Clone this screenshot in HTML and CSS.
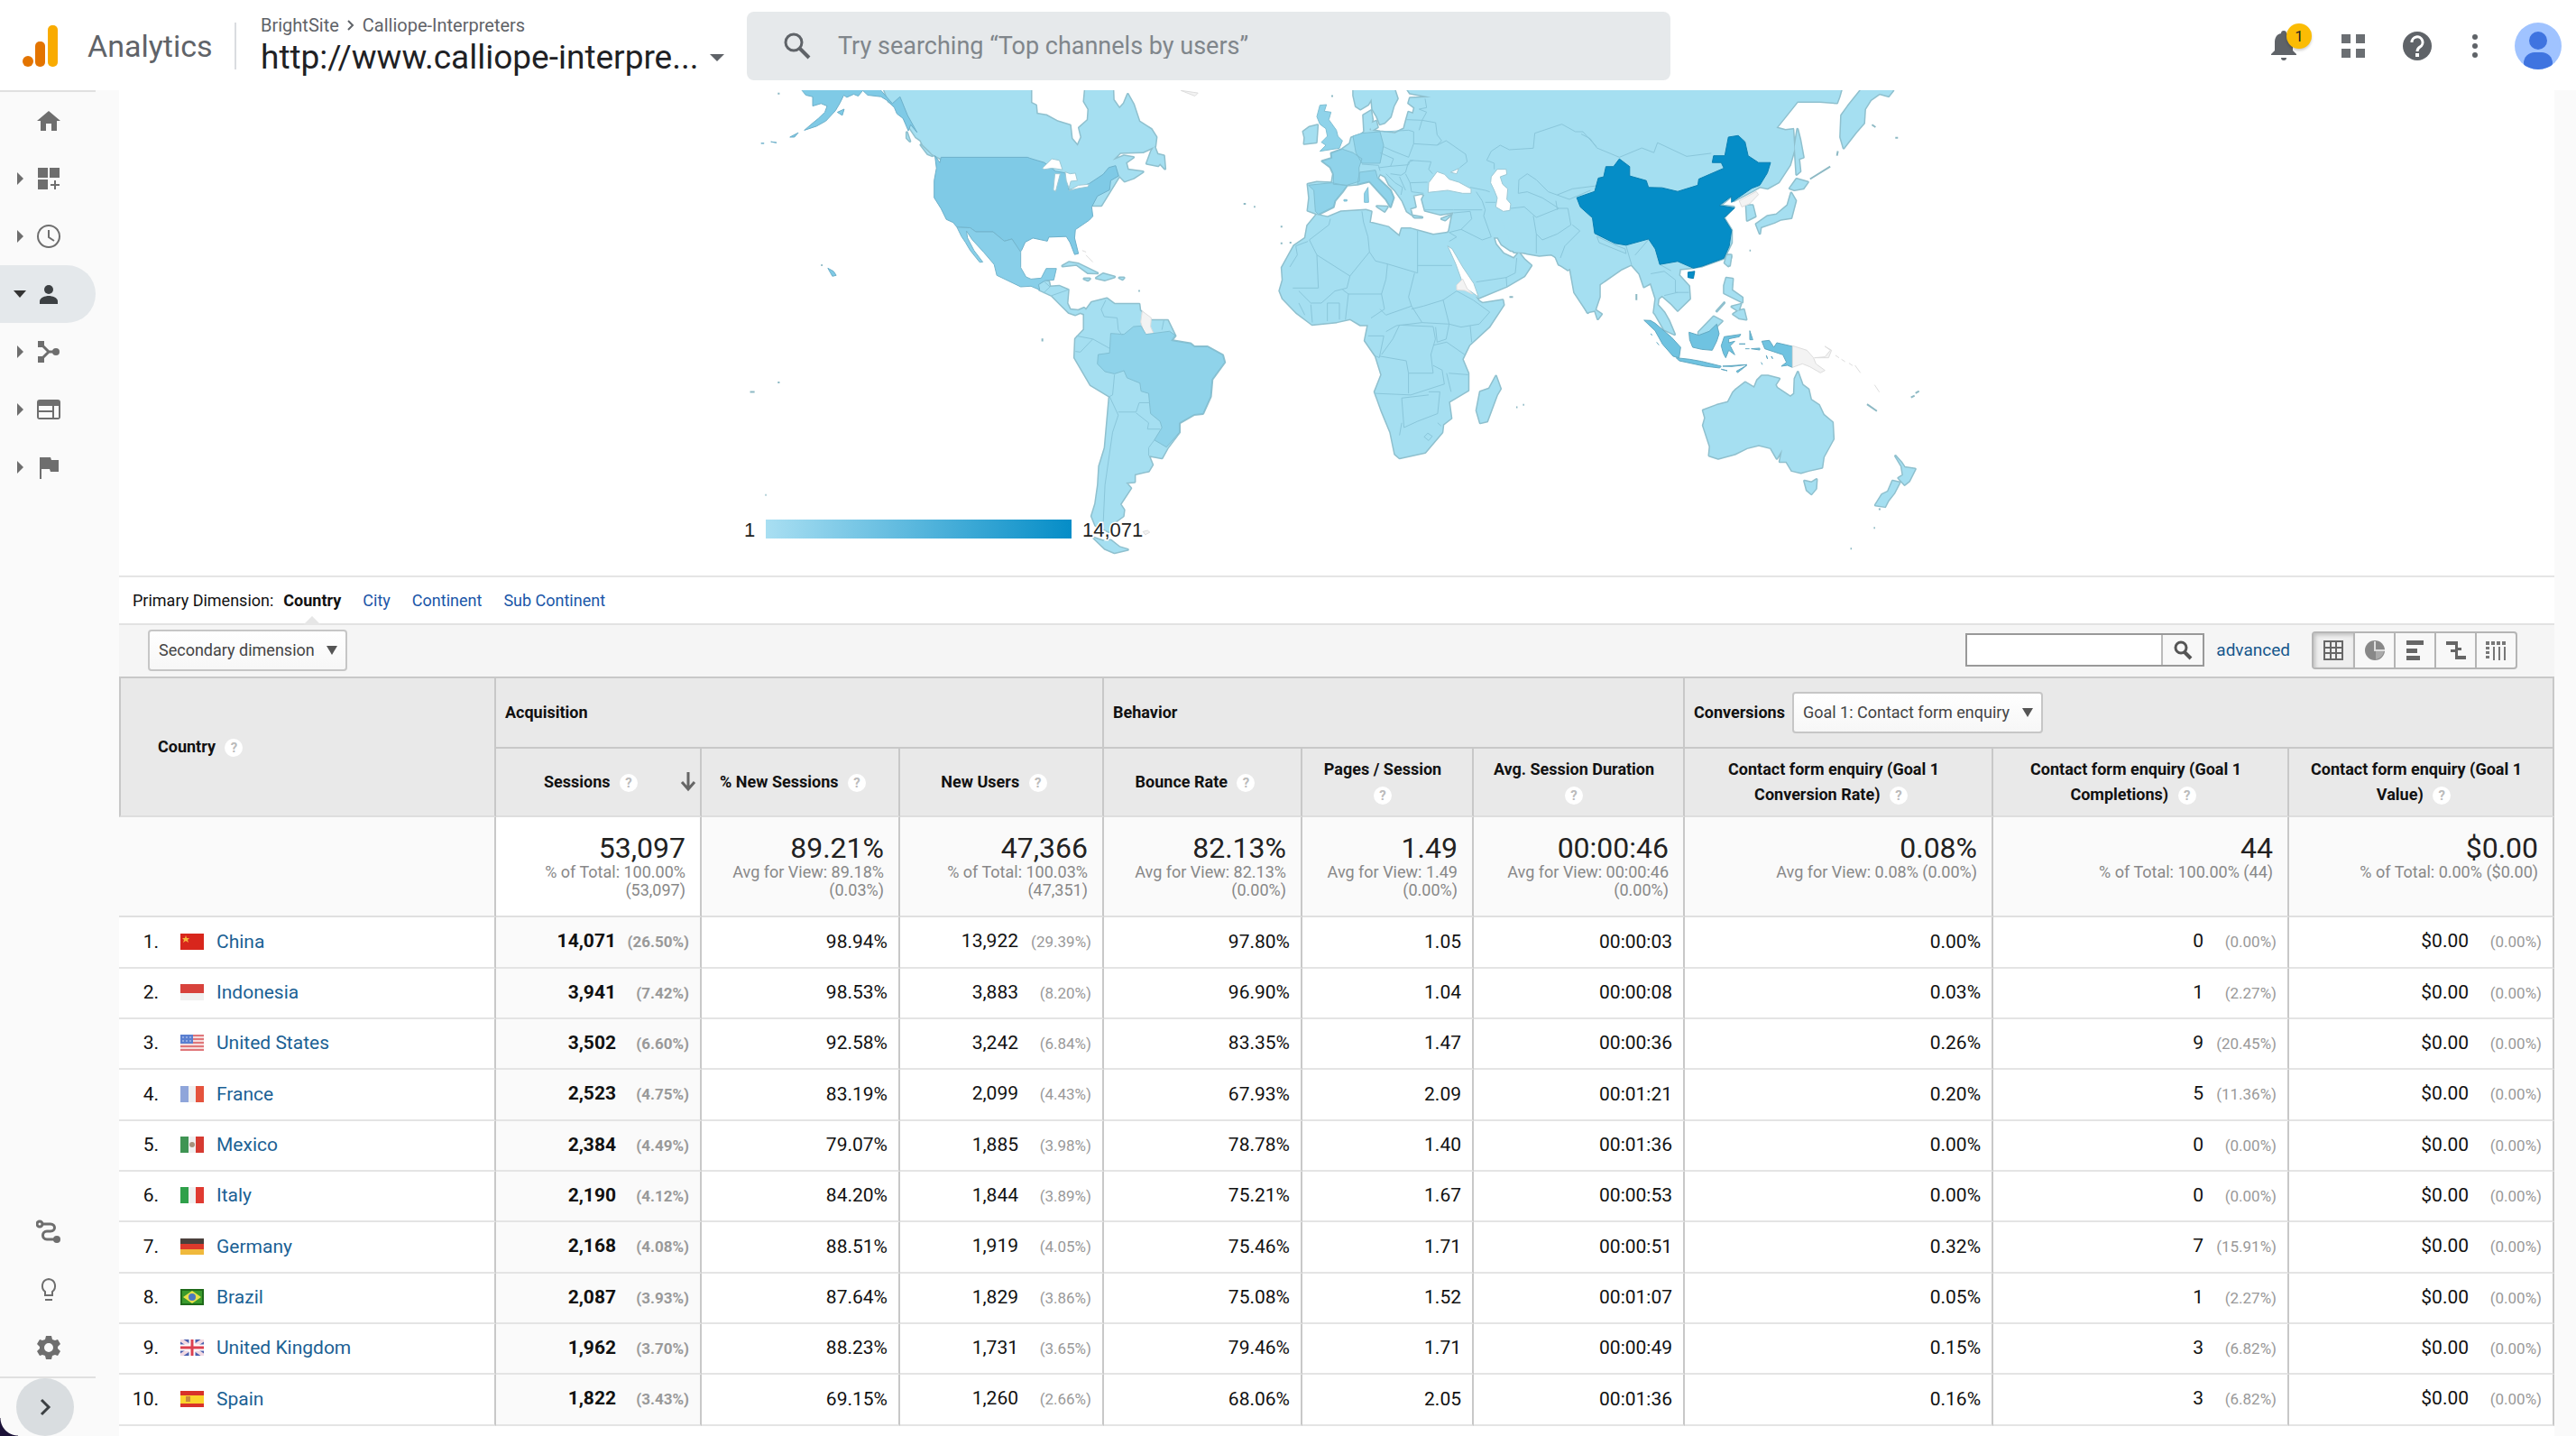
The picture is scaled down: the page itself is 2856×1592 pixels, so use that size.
FILE: index.html
```html
<!DOCTYPE html>
<html lang="en">
<head>
<meta charset="utf-8">
<title>Analytics</title>
<link rel="stylesheet" href="styles.css">
</head>
<body>
<svg class="defs" aria-hidden="true">
  <symbol id="f-cn" viewBox="0 0 26 18"><rect width="26" height="18" fill="#d8261c"/><path d="M6 2l1 3h3L8 7l1 3-3-2-3 2 1-3-2-2h3z" fill="#f6b73c"/></symbol>
  <symbol id="f-id" viewBox="0 0 26 18"><rect width="26" height="18" fill="#f0f0f0"/><rect width="26" height="10" fill="#d8423c"/></symbol>
  <symbol id="f-us" viewBox="0 0 26 18"><rect width="26" height="18" fill="#f6dcdc"/><path d="M0 1h26M0 5h26M0 9h26M0 13h26M0 17h26" stroke="#e0777a" stroke-width="2"/><rect width="14" height="10" fill="#5a7fd0"/><path d="M2 3h10M2 7h10" stroke="#c8d6f5" stroke-dasharray="2"/></symbol>
  <symbol id="f-fr" viewBox="0 0 26 18"><rect width="26" height="18" fill="#f0f0f0"/><rect width="9" height="18" fill="#8fa5da"/><rect x="17" width="9" height="18" fill="#e5533d"/></symbol>
  <symbol id="f-mx" viewBox="0 0 26 18"><rect width="26" height="18" fill="#f0f0f0"/><rect width="9" height="18" fill="#3f9453"/><rect x="17" width="9" height="18" fill="#d63a31"/><circle cx="13" cy="9" r="3" fill="#a5917c"/></symbol>
  <symbol id="f-it" viewBox="0 0 26 18"><rect width="26" height="18" fill="#f0f0f0"/><rect width="9" height="18" fill="#2fa04a"/><rect x="17" width="9" height="18" fill="#e03a31"/></symbol>
  <symbol id="f-de" viewBox="0 0 26 18"><rect width="26" height="18" fill="#f0b93c"/><rect width="26" height="12" fill="#dd3a2c"/><rect width="26" height="6" fill="#4a403c"/></symbol>
  <symbol id="f-br" viewBox="0 0 26 18"><rect width="26" height="18" fill="#1f6a1a"/><rect x="2" y="2" width="22" height="14" fill="#3a9a2c"/><path d="M13 2l10 7-10 7L3 9z" fill="#e8e04a"/><circle cx="13" cy="9" r="4" fill="#4c78c0"/></symbol>
  <symbol id="f-gb" viewBox="0 0 26 18"><rect width="26" height="18" fill="#4a5fae"/><path d="M0 0l26 18M26 0L0 18" stroke="#f2d9e2" stroke-width="4"/><path d="M13 0v18M0 9h26" stroke="#fff" stroke-width="7"/><path d="M13 0v18M0 9h26" stroke="#dc4050" stroke-width="3"/></symbol>
  <symbol id="f-es" viewBox="0 0 26 18"><rect width="26" height="18" fill="#d8322a"/><rect y="5" width="26" height="9" fill="#fbd42c"/><rect x="6" y="6" width="5" height="6" fill="#c98a3c"/></symbol>
</svg>

<header class="top">
  <a class="brand" href="#">
    <svg width="40" height="48" viewBox="0 0 40 48" aria-hidden="true"><rect x="28" y="1" width="11" height="46" rx="5" fill="#f9ab00"/><rect x="14" y="19" width="11" height="28" rx="5" fill="#e37400"/><circle cx="6" cy="41" r="6" fill="#e37400"/></svg>
    <span>Analytics</span>
  </a>
  <div class="property">
    <div class="crumbs">BrightSite <svg width="10" height="14" viewBox="0 0 10 14"><path d="M2 2l5 5-5 5" fill="none" stroke="#5f6368" stroke-width="2"/></svg> Calliope-Interpreters</div>
    <button class="url">http://www.calliope-interpre...<i class="down"></i></button>
  </div>
  <label class="search">
    <svg width="32" height="32" viewBox="0 0 32 32" aria-label="Search"><circle cx="12" cy="12" r="9" fill="none" stroke="#5f6368" stroke-width="3"/><path d="M18 18l11 11" stroke="#5f6368" stroke-width="4"/></svg>
    <input type="text" placeholder="Try searching “Top channels by users”">
  </label>
  <div class="tools">
    <button class="bell" aria-label="Notifications"><svg width="28" height="34" viewBox="0 0 28 34" fill="#5f6368"><path d="M14 0c2 0 3 1 3 3 5 1 7 5 7 10v9l4 4v1H0v-1l4-4v-9C4 8 6 4 11 3c0-2 1-3 3-3zM11 30h6c0 2-1 3-3 3s-3-1-3-3z"/></svg><span class="badge">1</span></button>
    <button aria-label="Apps"><svg width="28" height="28" viewBox="0 0 28 28" fill="#6b6f73"><path d="M1 1h10v10H1zM17 1h10v10H17zM1 17h10v10H1zM17 17h10v10H17z"/></svg></button>
    <button aria-label="Help"><svg width="34" height="34" viewBox="0 0 34 34"><circle cx="17" cy="17" r="16" fill="#5f6368"/><path d="M11 13a6 6 0 1 1 9 5q-3 2-3 5" fill="none" stroke="#fff" stroke-width="3"/><rect x="15" y="25" width="4" height="4" fill="#fff"/></svg></button>
    <button class="more" aria-label="More"><svg width="8" height="28" viewBox="0 0 8 28" fill="#5f6368"><circle cx="4" cy="4" r="3"/><circle cx="4" cy="14" r="3"/><circle cx="4" cy="24" r="3"/></svg></button>
    <button aria-label="Account"><svg width="52" height="52" viewBox="0 0 52 52"><clipPath id="av"><circle cx="26" cy="26" r="26"/></clipPath><g clip-path="url(#av)"><rect width="52" height="52" fill="#a0c3ff"/><circle cx="26" cy="20" r="10" fill="#3f74e0"/><rect x="10" y="33" width="32" height="24" rx="12" fill="#3f74e0"/></g></svg></button>
  </div>
</header>

<div class="layout">
  <nav class="side" aria-label="Reports">
    <a href="#" aria-label="Home"><i></i><svg viewBox="0 0 28 28"><path d="M14 3L1 14h4v11h6v-8h6v8h6V14h4z"/></svg></a>
    <a href="#" aria-label="Customization"><i class="right"></i><svg viewBox="0 0 28 28"><path d="M2 2h11v11H2zM15 2h11v11H15zM2 15h11v11H2zM20 16h2v4h4v2h-4v4h-2v-4h-4v-2h4z"/></svg></a>
    <a href="#" aria-label="Realtime"><i class="right"></i><svg viewBox="0 0 28 28"><g fill="none" stroke="#6e6e6e" stroke-width="2"><circle cx="14" cy="14" r="12"/><path d="M14 7v8l6 4"/></g></svg></a>
    <a href="#" class="on" aria-label="Audience"><i class="down"></i><svg viewBox="0 0 28 28"><circle cx="14" cy="9" r="5"/><path d="M4 25v-3c0-4 6-6 10-6s10 2 10 6v3z"/></svg></a>
    <a href="#" aria-label="Acquisition"><i class="right"></i><svg viewBox="0 0 28 28"><path d="M2 2h7v7H2zM2 19h7v7H2z"/><circle cx="22" cy="14" r="4"/><path d="M6 6l8 8-8 8M14 14h8" fill="none" stroke="#6e6e6e" stroke-width="3"/></svg></a>
    <a href="#" aria-label="Behavior"><i class="right"></i><svg viewBox="0 0 28 28"><path d="M4 3h20q3 0 3 3v16q0 3-3 3H4q-3 0-3-3V6q0-3 3-3zM3 10v5h15v-5zM3 17v6h15v-6zM20 10v13h5V10z" fill-rule="evenodd"/></svg></a>
    <a href="#" aria-label="Conversions"><i class="right"></i><svg viewBox="0 0 28 28"><path d="M4 3h12l1 3h8v13h-9l-1-3H6v11H4z"/></svg></a>
    <span class="grow"></span>
    <a href="#" aria-label="Attribution"><i></i><svg viewBox="0 0 28 28"><g fill="none" stroke="#6e6e6e" stroke-width="3"><circle cx="4" cy="5" r="3"/><path d="M7 5h9c6 0 6 8 0 8h-4c-6 0-6 9 0 9h10"/></g><circle cx="23" cy="22" r="4"/></svg></a>
    <a href="#" aria-label="Discover"><i></i><svg viewBox="0 0 28 28"><path d="M10 20v-4c-5-4-4-13 4-14 8 1 9 10 4 14v4zM10 25h8" fill="none" stroke="#6e6e6e" stroke-width="2"/></svg></a>
    <a href="#" aria-label="Admin"><i></i><svg viewBox="0 0 28 28"><path d="M11 1h6l1 4 3 1 3-1 3 5-3 3v2l3 3-3 5-3-1-3 1-1 4h-6l-1-4-3-1-3 1-3-5 3-3v-2l-3-3 3-5 3 1 3-1zM14 9a5 5 0 1 0 0 10 5 5 0 0 0 0-10z" fill-rule="evenodd"/></svg></a>
    <div class="foot"><button aria-label="Expand"><svg width="20" height="24" viewBox="0 0 20 24"><path d="M6 4l8 8-8 8" fill="none" stroke="#3c4043" stroke-width="3"/></svg></button></div>
  </nav>

  <main class="card">
    <svg class="map" viewBox="132 100 2700 538" role="img" aria-label="Sessions by country">
      <defs>
        <linearGradient id="scale"><stop offset="0" stop-color="#a9dff2"/><stop offset="1" stop-color="#058dc7"/></linearGradient>
        <g id="land">
          <g transform="translate(800 90) scale(.4209 .3444)">
            <path d="M420 0L815 0L815 70L828 78L830 105L855 110L885 130L918 142L922 185L938 208L948 180L942 150L965 125L967 90L955 65L960 0L1030 0L1032 60L1048 88L1060 72L1070 42L1085 75L1100 130L1132 155L1145 180L1142 210L1110 228L1050 230L1030 255L1060 240L1085 245L1065 262L1070 285L1110 292L1085 312L1062 322L1048 305L1000 400L700 400L578 250L555 235L545 222L530 205L524 190L512 180L500 158L490 140L468 90L440 65Z"/>
            <path d="M1132 225L1140 210L1148 235L1165 240L1168 282L1155 265L1150 272L1120 265Z"/>
            <path d="M835 655L852 642L862 645L865 662L890 660L913 672L910 715L918 735L940 738L955 730L968 748L960 752L945 745L932 752L915 745L890 715L870 690L838 672Z"/>
            <path d="M898 595L915 583L940 588L990 618L965 617L935 590ZM987 634L1005 620L1035 630L1010 640ZM955 636h15l-5 5zM1048 633h12l-4 5zM488 165l8 28-8-10zM525 205l30 35-12-6z"/>
            <path d="M975 712L1015 700L1035 718L1100 718L1102 738L1130 770L1175 770L1195 820L1185 835L1235 845L1245 855L1280 855L1320 882L1325 905L1292 960L1288 1015L1268 1070L1245 1073L1206 1100L1206 1130L1175 1180L1160 1213L1125 1205L1135 1235L1125 1255L1088 1265L1088 1290L1065 1292L1078 1310L1050 1362L1060 1380L1058 1400L1030 1425L1020 1450L985 1430L975 1400L985 1360L992 1300L995 1240L1010 1180L1022 1015L972 978L930 890L932 830L955 800L955 745Z"/>
            <path d="M980 1470L1005 1480L1025 1478L1048 1500L1070 1508L1035 1518L1010 1505Z"/>
          </g>
          <g transform="translate(1430 96) scale(.3333)">
            <path d="M60 325L90 318L140 320L145 290L135 268L108 248L140 238L138 222L175 208L200 190L205 170L240 158L248 150L245 95L270 80L275 110L265 145L300 150L350 155L380 140L388 110L395 85L410 90L415 70L395 55L400 38L470 35L400 22L385 0L1030 0L1030 700L1015 745L990 750L960 690L942 600L925 610L895 590L890 570L870 558L830 562L790 555L765 548L735 545L705 525L692 502L678 502L685 525L710 555L745 572L762 552L780 575L803 595L780 630L720 665L628 703L600 690L570 655L525 530L515 505L530 480L540 430L545 418L500 425L450 412L440 375L448 360L438 356L410 362L418 400L400 405L405 425L390 415L375 380L350 345L330 325L318 300L300 290L292 305L335 345L345 370L335 400L320 375L265 315L225 325L190 328L175 350L150 380L145 400L95 425L60 412L65 370Z"/>
            <path d="M212 0L212 30L220 65L235 75L260 60L272 40L275 75L290 100L300 125L315 120L335 100L345 65L358 40L345 0Z"/>
            <path d="M65 135L92 128L88 185L48 190L50 170L45 150ZM290 398L325 400L315 415ZM410 430l30 5h-25zM505 440l30-12-18 16zM262 125l25-10 5 20-20 12z"/>
          </g>
          <g transform="translate(1380 90) scale(.49745 .3444)">
            <path d="M160 430L185 438L215 420L270 415L282 420L278 455L320 470L345 500L350 475L370 475L420 495L455 488L460 510L455 530L475 590L486 642L500 665L522 708L530 715L575 705L577 720L545 790L500 850L485 895L498 940L498 995L455 1032L460 1085L442 1105L440 1130L402 1195L345 1213L335 1200L325 1130L305 1060L290 1000L305 945L292 885L268 835L275 785L258 785L235 765L205 775L150 783L115 745L85 700L78 675L85 640L83 600L110 530L135 505L140 465Z"/>
            <path d="M560 0L1335 0L1325 50L1320 70L1282 65L1232 65L1185 150L1205 158L1222 155L1225 220L1215 270L1190 325L1165 345L1148 340L1130 355L1090 385L1085 370L1060 400L1090 405L1068 440L1085 480L1085 520L1068 570L1020 595L1000 600L970 605L968 625L990 660L992 700L965 738L950 715L930 690L922 700L920 720L935 745L945 770L958 815L935 800L915 750L912 745L916 700L905 650L890 662L880 620L862 590L840 605L785 660L780 720L765 745L735 680L725 600L700 590L690 555L600 550L560 400Z"/>
            <path d="M1378 20L1410 20L1445 30L1435 48L1415 40L1395 60L1382 90L1380 135L1362 165L1335 215L1328 180L1330 110L1345 80ZM1232 155L1238 190L1245 245L1235 250L1238 290L1230 300L1226 210ZM1230 315L1255 325L1245 345L1225 350L1215 345ZM1218 360L1228 385L1218 440L1195 445L1180 455L1150 470L1148 490L1140 460L1165 435L1185 430L1210 400Z"/>
            <path d="M1118 400L1132 400L1138 435L1120 448ZM1075 560L1084 565L1078 595L1070 585ZM560 950L570 990L562 1010L540 1095L525 1100L517 1060L525 1000L545 990ZM780 735L795 750L787 765Z"/>
          </g>
          <g transform="translate(1740 250) scale(.3333)">
            <path d="M445 615L490 598L528 588L545 555L555 545L585 522L615 540L625 515L640 500L660 500L698 510L685 530L690 540L735 570L748 560L750 510L760 488L775 530L795 545L803 580L830 598L845 630L875 655L878 710L845 770L840 805L795 815L770 822L740 815L722 785L700 785L708 745L690 775L670 740L630 730L590 740L550 760L495 775L465 765L468 735L445 665L452 640Z"/>
            <path d="M782 850L805 855L822 845L820 875L805 893L790 880ZM1085 767L1105 790L1115 805L1150 810L1130 850L1115 862L1095 840L1110 830L1105 800ZM1075 850L1098 855L1080 890L1060 915L1050 935L1018 930L1040 895L1060 885Z"/>
            <path d="M522 175L543 178L540 215L575 240L575 255L545 240L515 225L515 200ZM540 270l30-8-8 22zM545 295L560 285L580 280L588 312L565 308ZM490 285l25-28zM430 355L480 303L508 318L490 335L465 355L430 370ZM528 98h10l-5 35-12-10z"/>
          </g>
        </g>
      </defs>
      <use href="#land" class="coast"/>
      <use href="#land" class="fill"/>

      <g transform="translate(800 90) scale(.4209 .3444)">
        <path class="us" d="M212 0L212 30L222 45L240 50L240 80L262 72L278 80L272 100L255 120L235 140L218 158L250 145L275 128L300 95L312 70L322 45L330 52L348 42L360 48L372 30L385 45L420 50L440 65L455 85L462 105L478 120L492 160L498 140L515 165L490 110L470 50L450 72L420 30L420 0ZM305 100l18-10-5 20zM180 180l22-14-10 14zM104 200h8zM130 195l15 3zM280 602L295 612L302 625L292 628Z"/>
        <path class="us" d="M562 240L575 262L578 245L806 245L812 248L850 262L880 290L905 295L915 350L968 330L1005 300L1020 278L1038 272L1046 305L1025 320L1022 350L990 370L975 405L978 435L968 448L932 478L930 505L940 555L930 558L918 520L908 500L862 502L858 515L820 505L800 518L790 545L785 552L765 508L745 515L715 485L670 485L655 472L620 470L610 455L592 445L578 410L560 375L560 320L566 280Z"/>
        <path class="mx" d="M620 470L655 472L670 485L715 485L745 515L765 508L788 550L788 600L802 630L815 637L842 634L855 603L882 603L875 640L852 642L835 655L838 672L815 660L788 662L725 625L718 590L690 550L660 510L645 482L648 505L665 545L688 582L680 583L655 545L642 518L632 500Z"/>
        <path class="sea" d="M845 280L870 250L890 255L898 285L870 280L850 284ZM878 298L892 298L880 355L874 350ZM905 292L918 298L932 296L937 320L920 322L915 345L908 320ZM915 352L940 335L968 332L965 340L940 345Z"/>
        <path class="none" d="M1108 740L1132 762L1130 790L1138 812L1114 815L1104 775ZM1110 1450l12-4 6 6-12 8zM1210 30l45 8-8 10zM950 545l10 5M960 560l18 22"/>
        <path class="br" d="M1025 812L1060 815L1085 790L1105 788L1118 815L1180 805L1195 818L1185 835L1235 845L1245 855L1280 855L1320 882L1325 905L1292 960L1288 1015L1268 1070L1245 1073L1206 1100L1206 1130L1172 1178L1140 1155L1160 1115L1155 1095L1130 1070L1125 1005L1105 998L1102 972L1068 955L1060 932L1035 942L1010 935L990 910L992 880L1022 875Z"/>
        <path class="line" d="M1012 705L1000 735L1008 758L1042 762L1045 800L1055 818M935 820L978 830L1022 860M978 830L945 872L932 870M1035 945L1030 1010L1022 1015L1045 1075L1030 1130L1010 1300L1005 1430M1045 1065L1092 1065L1100 1035L1128 1035M1092 1068L1125 1100L1122 1120L1155 1120M1140 1155L1125 1180L1125 1205M1165 770L1160 800M850 645L865 662L848 682M870 690L912 672"/>
        <path class="isle" d="M845 828v10M148 970h5M75 1000h12M1375 395h6M1402 404h4M148 40h5M1098 675h4M115 1332h3M262 592h4"/>
      </g>

      <g transform="translate(1430 96) scale(.3333)">
        <path class="sea" d="M490 283L515 292L530 308L562 318L603 340L603 355L575 355L525 345L460 352L462 320ZM535 285L562 272L555 290ZM670 300L690 275L720 275L722 292L700 300L708 325L725 340L722 375L735 390L732 412L710 415L685 400L690 370L680 345L668 320ZM525 530L540 540L575 600L612 655L628 700L600 680L580 670L570 640L552 590Z"/>
        <path class="none" d="M555 660L575 640L590 672L608 690L582 678L555 676Z"/>
        <path class="eu" d="M100 62L122 60L115 82L137 85L130 110L155 145L160 165L175 180L165 205L100 215L120 195L105 185L125 165L120 140L100 125L90 100ZM175 208L210 220L240 240L230 270L232 315L190 328L145 325L145 290L135 268L108 248L140 238L138 222ZM210 165L240 155L300 150L312 195L300 255L240 255L220 220ZM62 328L140 320L190 330L150 380L145 400L95 425L85 415L80 345ZM232 285L285 278L292 305L335 345L345 370L335 400L320 375L265 315L225 325ZM248 355L260 335L262 385L248 385ZM180 376h10v5h-10z"/>
        <path class="line" d="M240 258L295 262L300 280M312 150L395 145L412 150L412 190L490 195L505 180L490 160L485 120L440 112L455 85L430 75L455 70L450 40M388 110L440 112L430 145M312 200L345 215L395 235L412 190M300 220L345 240L335 265L295 270M335 265L395 260L400 245L470 250L462 275L475 290M385 290L400 320L458 318M400 320L405 350L445 355M335 290L370 295L385 285L395 250M320 290L350 320L375 335L370 360M365 300L385 345M410 245L400 250M490 195L520 180L585 225L590 250L565 270M655 245L670 215L700 195L730 210L810 205L815 155L905 125L950 150L975 150L1020 200M655 245L680 255L680 275M600 335L650 345L665 350M620 350L640 380L650 410L645 430L670 500L640 510L570 475L605 440L600 415L545 420M570 475L530 485L555 500L530 515M450 410L545 410L640 410M650 385L685 385M735 405L780 400L820 435L895 405L925 405L935 460L890 490L840 510L820 490L810 430M820 490L820 555M895 405L840 370L790 350L760 355L762 310L790 290L820 310L860 350L930 375L1000 345M885 380L890 410M940 460L965 480L915 530L900 570M890 360L940 340L1020 330M755 570L750 620L720 635L620 650M720 635L722 665M240 415L245 450L260 500L265 550L285 580L325 590L425 620L425 480M425 595L540 595M265 550L200 630L90 560L65 510L130 460L135 440M60 515L20 530L25 560L0 600M90 560L95 670L10 670M200 630L190 670L150 680L105 720L70 720L30 680M325 590L320 640L305 690L195 690L175 675M125 720L165 720L165 775M125 720L125 780M195 690L185 775M305 690L315 740L270 770M300 740L320 760L405 730L440 785L355 795L320 815M415 620L395 700L405 730M405 740L445 730L510 710L530 790L440 785M510 710L555 680L610 710L665 750L630 790L570 800L530 790M530 790L520 840L490 850L485 800M600 795L605 850M70 725L75 785M30 720L50 760"/>
      </g>

      <g transform="translate(1380 90) scale(.49745 .3444)">
        <path class="line" d="M835 245L885 215L912 230L920 198L985 242L1040 232M835 245L785 215L770 185L750 170M785 500L830 530L848 540L850 555L790 520L785 500M850 530L862 590M900 510L870 560M905 620L935 612L960 640L960 680L990 680M925 590L950 610M935 690L965 680M275 820L310 820L300 890L292 885M345 785L330 830L305 880M345 785L420 790L425 830L415 880L420 940L365 940L360 900L300 885M420 850L450 840L490 880M420 915L440 930L445 975L370 1010L290 1005M365 940L365 1005M410 1000L435 1000L430 1070L385 1095L355 1115L350 1020L410 1010M350 1100L345 1140M455 940L498 945M450 940L460 1000M400 1145l8-12 10 10-8 14zM430 1100l8 10"/>
        <path class="cn" d="M740 375L780 355L788 312L800 308L805 275L822 275L835 250L858 275L858 305L895 320L900 342L930 343L965 355L1010 335L1012 315L1068 280L1062 262L1042 262L1045 240L1070 240L1078 180L1100 175L1115 195L1122 240L1145 262L1172 262L1165 295L1148 335L1130 345L1085 390L1085 370L1058 400L1092 408L1068 440L1085 480L1080 530L1068 570L1020 595L1000 602L965 580L925 590L915 540L900 508L850 528L825 522L780 490L775 440L748 405ZM988 615L1003 612L1000 635L988 632Z"/>
        <path class="none" d="M1102 385L1140 355L1145 365L1125 395L1108 405Z"/>
        <path class="isle" d="M1260 315l45-40M1320 240l2-15M1398 140l8 8M1450 182h6M590 695h8M605 1050h3M620 1042h3M80 522h4M100 520h4M80 468h4M1125 545h3M1387 1040l22 22M1485 1018l8-6M1495 1004l8-6M873 685v20M1413 1378h4M1402 1438h3M1350 1505h3M195 45v6"/>
      </g>

      <g transform="translate(1740 250) scale(.3333)">
        <path class="id" d="M248 315L270 316L285 325L340 372L370 405L365 440L345 435L310 395L285 350ZM355 440L400 445L440 452L505 468L500 474L450 468L365 450ZM398 355L430 365L465 352L490 328L498 360L490 385L475 415L440 412L410 405L400 380ZM515 370L570 362L565 370L530 377L530 390L550 385L535 400L550 430L530 415L520 440L512 425L505 400ZM640 385L665 382L680 405L690 390L742 402L742 472L725 465L705 468L722 455L710 430L680 420L650 410ZM510 468l80-5-50 6zM555 485l35-20-30 24zM505 478l20 5zM600 350l10 30h-10zM605 410l28-2v6zM655 432l4 12zM672 435l4 8zM565 394h20zM270 360l6 5M290 388l8 10M585 410h14M638 455l4 8"/>
        <path class="none" d="M742 400L790 415L812 440L820 460L850 482L835 490L800 470L775 460L742 472ZM815 440L850 437L868 415L850 402L872 415L862 440ZM885 432l12 8M905 445l12 8M930 458l12 8M950 465l18 25M1015 530l16 24"/>
      </g>

      <text class="lg" x="825" y="595">1</text>
      <rect x="849" y="576" width="339" height="21" fill="url(#scale)"/>
      <text class="lg" x="1200" y="595">14,071</text>
    </svg>

    <div class="dims">
      <span>Primary Dimension:</span>
      <b>Country</b><a href="#">City</a><a href="#">Continent</a><a href="#">Sub Continent</a>
    </div>

    <div class="bar">
      <span class="pick"><select aria-label="Secondary dimension"><option>Secondary dimension</option></select></span>
      <form class="find">
        <input type="text" aria-label="Filter rows"><button type="button" aria-label="Search"><svg width="22" height="22" viewBox="0 0 22 22" fill="none" stroke="#555"><circle cx="9" cy="8" r="6" stroke-width="3"/><path d="M13 13l7 7" stroke-width="4"/></svg></button>
      </form>
      <a class="adv" href="#">advanced</a>
      <div class="views">
        <button class="sel" aria-label="Data"><svg viewBox="0 0 24 24"><path d="M2 2h20v20H2zM9 2v20M15 2v20M2 9h20M2 15h20" fill="none" stroke="#666" stroke-width="2"/></svg></button>
        <button aria-label="Percentage"><svg viewBox="0 0 24 24"><circle cx="12" cy="12" r="11" fill="#888"/><path d="M12 2v10h11" fill="none" stroke="#ddd" stroke-width="2"/><path d="M13 13h9a10 10 0 0 1-9 9z" fill="#aaa"/></svg></button>
        <button aria-label="Performance"><svg viewBox="0 0 24 24" fill="#666"><path d="M2 1h19v5H2zM2 10h12v5H2zM2 18h15v5H2z"/></svg></button>
        <button aria-label="Comparison"><svg viewBox="0 0 24 24" fill="#666"><path d="M1 2h12v4H1zM6 11h7v3H6zM13 9h5v3h-5zM13 18h10v4H13zM11 2h3v20h-3z"/></svg></button>
        <button aria-label="Pivot"><svg viewBox="0 0 24 24" fill="none" stroke="#777"><path d="M0 4h24" stroke-width="4" stroke-dasharray="4 2"/><path d="M2 8v15" stroke-width="4" stroke-dasharray="3 2"/><path d="M9 8v15M15 8v15M21 8v15" stroke-width="2"/></svg></button>
      </div>
    </div>

    <table>
      <colgroup><col class="c0"><col class="c1"><col class="c2"><col class="c3"><col class="c4"><col class="c5"><col class="c6"><col class="c7"><col class="c8"><col class="c9"></colgroup>
      <thead>
        <tr class="groups"><th rowspan="2" class="country">Country <button class="help">?</button></th><th colspan="3">Acquisition</th><th colspan="3">Behavior</th><th colspan="3"><div class="conv"><label for="goal">Conversions</label><span class="pick"><select id="goal"><option>Goal 1: Contact form enquiry</option></select></span></div></th></tr>
        <tr class="metrics"><th class="sorted">Sessions <button class="help">?</button><svg class="arrow" width="20" height="22" viewBox="0 0 20 22"><path d="M10 0v18M3 11l7 8 7-8" fill="none" stroke="#666" stroke-width="3"/></svg></th><th>% New Sessions <button class="help">?</button></th><th>New Users <button class="help">?</button></th><th>Bounce Rate <button class="help">?</button></th><th>Pages / Session<br><button class="help solo">?</button></th><th>Avg. Session Duration<br><button class="help solo">?</button></th><th>Contact form enquiry (Goal 1<br>Conversion Rate) <button class="help">?</button></th><th>Contact form enquiry (Goal 1<br>Completions) <button class="help">?</button></th><th>Contact form enquiry (Goal 1<br>Value) <button class="help">?</button></th></tr>
      </thead>
      <tbody class="totals">
        <tr><td></td><td class="s"><strong>53,097</strong>% of Total: 100.00%<br>(53,097)</td><td><strong>89.21%</strong>Avg for View: 89.18%<br>(0.03%)</td><td><strong>47,366</strong>% of Total: 100.03%<br>(47,351)</td><td><strong>82.13%</strong>Avg for View: 82.13%<br>(0.00%)</td><td><strong>1.49</strong>Avg for View: 1.49<br>(0.00%)</td><td><strong>00:00:46</strong>Avg for View: 00:00:46<br>(0.00%)</td><td><strong>0.08%</strong>Avg for View: 0.08% (0.00%)</td><td><strong>44</strong>% of Total: 100.00% (44)</td><td><strong>$0.00</strong>% of Total: 0.00% ($0.00)</td></tr>
      </tbody>
      <tbody class="rows">
        <tr><th><div><span>1.</span><svg><use href="#f-cn"/></svg><a href="#">China</a></div></th><td class="s">14,071<i>(26.50%)</i></td><td>98.94%</td><td>13,922<i>(29.39%)</i></td><td>97.80%</td><td>1.05</td><td>00:00:03</td><td>0.00%</td><td>0<i>(0.00%)</i></td><td>$0.00<i>(0.00%)</i></td></tr>
        <tr><th><div><span>2.</span><svg><use href="#f-id"/></svg><a href="#">Indonesia</a></div></th><td class="s">3,941<i>(7.42%)</i></td><td>98.53%</td><td>3,883<i>(8.20%)</i></td><td>96.90%</td><td>1.04</td><td>00:00:08</td><td>0.03%</td><td>1<i>(2.27%)</i></td><td>$0.00<i>(0.00%)</i></td></tr>
        <tr><th><div><span>3.</span><svg><use href="#f-us"/></svg><a href="#">United States</a></div></th><td class="s">3,502<i>(6.60%)</i></td><td>92.58%</td><td>3,242<i>(6.84%)</i></td><td>83.35%</td><td>1.47</td><td>00:00:36</td><td>0.26%</td><td>9<i>(20.45%)</i></td><td>$0.00<i>(0.00%)</i></td></tr>
        <tr><th><div><span>4.</span><svg><use href="#f-fr"/></svg><a href="#">France</a></div></th><td class="s">2,523<i>(4.75%)</i></td><td>83.19%</td><td>2,099<i>(4.43%)</i></td><td>67.93%</td><td>2.09</td><td>00:01:21</td><td>0.20%</td><td>5<i>(11.36%)</i></td><td>$0.00<i>(0.00%)</i></td></tr>
        <tr><th><div><span>5.</span><svg><use href="#f-mx"/></svg><a href="#">Mexico</a></div></th><td class="s">2,384<i>(4.49%)</i></td><td>79.07%</td><td>1,885<i>(3.98%)</i></td><td>78.78%</td><td>1.40</td><td>00:01:36</td><td>0.00%</td><td>0<i>(0.00%)</i></td><td>$0.00<i>(0.00%)</i></td></tr>
        <tr><th><div><span>6.</span><svg><use href="#f-it"/></svg><a href="#">Italy</a></div></th><td class="s">2,190<i>(4.12%)</i></td><td>84.20%</td><td>1,844<i>(3.89%)</i></td><td>75.21%</td><td>1.67</td><td>00:00:53</td><td>0.00%</td><td>0<i>(0.00%)</i></td><td>$0.00<i>(0.00%)</i></td></tr>
        <tr><th><div><span>7.</span><svg><use href="#f-de"/></svg><a href="#">Germany</a></div></th><td class="s">2,168<i>(4.08%)</i></td><td>88.51%</td><td>1,919<i>(4.05%)</i></td><td>75.46%</td><td>1.71</td><td>00:00:51</td><td>0.32%</td><td>7<i>(15.91%)</i></td><td>$0.00<i>(0.00%)</i></td></tr>
        <tr><th><div><span>8.</span><svg><use href="#f-br"/></svg><a href="#">Brazil</a></div></th><td class="s">2,087<i>(3.93%)</i></td><td>87.64%</td><td>1,829<i>(3.86%)</i></td><td>75.08%</td><td>1.52</td><td>00:01:07</td><td>0.05%</td><td>1<i>(2.27%)</i></td><td>$0.00<i>(0.00%)</i></td></tr>
        <tr><th><div><span>9.</span><svg><use href="#f-gb"/></svg><a href="#">United Kingdom</a></div></th><td class="s">1,962<i>(3.70%)</i></td><td>88.23%</td><td>1,731<i>(3.65%)</i></td><td>79.46%</td><td>1.71</td><td>00:00:49</td><td>0.15%</td><td>3<i>(6.82%)</i></td><td>$0.00<i>(0.00%)</i></td></tr>
        <tr><th><div><span>10.</span><svg><use href="#f-es"/></svg><a href="#">Spain</a></div></th><td class="s">1,822<i>(3.43%)</i></td><td>69.15%</td><td>1,260<i>(2.66%)</i></td><td>68.06%</td><td>2.05</td><td>00:01:36</td><td>0.16%</td><td>3<i>(6.82%)</i></td><td>$0.00<i>(0.00%)</i></td></tr>
      </tbody>
    </table>
  </main>
</div>
</body>
</html>
```
FILE: styles.css
```css
* { box-sizing: border-box; }
body { margin: 0; min-height: 100vh; display: flex; flex-direction: column; font: 18px/28px Roboto, "Noto Sans", sans-serif; color: #111; background: #fafafa; }
button, input, select { font: inherit; color: inherit; margin: 0; }
button { border: 0; background: none; padding: 0; cursor: pointer; }
a { text-decoration: none; color: #1a56a8; }
svg { display: block; flex: none; }
.defs { position: absolute; width: 0; height: 0; }

/* header */
.top { display: flex; align-items: center; height: 100px; padding: 2px 16px 0 25px; background: #fff; }
.brand { display: flex; align-items: center; gap: 32px; width: 237px; height: 52px; border-right: 2px solid #dadce0; color: #5f6368; font-size: 34px; line-height: 52px; }
.property { width: 566px; padding-left: 27px; color: #5f6368; }
.crumbs { display: flex; align-items: center; gap: 8px; font-size: 20px; line-height: 26px; }
.url { display: flex; align-items: center; gap: 12px; font-size: 37px; line-height: 46px; color: #202124; white-space: nowrap; }
.down { border: 8px solid transparent; border-top-color: #5f6368; border-bottom: 0; }
.right { border: 7px solid transparent; border-left-color: #6e6e6e; border-right: 0; }
.search { display: flex; align-items: center; gap: 29px; flex: 0 1 1024px; height: 76px; padding: 0 40px; border-radius: 8px; background: #e6e9eb; }
.search input { flex: 1; min-width: 0; border: 0; outline: 0; background: none; padding: 0; font-size: 27px; }
.search input::placeholder { color: #80868b; opacity: 1; }
.tools { display: flex; align-items: center; gap: 40px; margin-left: auto; }
.tools button { position: relative; }
.tools .more { margin-left: 3px; }
.tools .bell { margin-right: 9px; }
.badge { position: absolute; left: 17px; top: -8px; width: 28px; height: 28px; border-radius: 50%; background: #fbbc04; color: #202124; font-size: 17px; line-height: 28px; box-shadow: 0 2px 3px #0003; }

/* side navigation */
.layout { flex: 1; display: flex; }
.side { display: flex; flex-direction: column; flex: none; width: 106px; margin-right: 26px; border-top: 2px solid #e0e0e0; }
.side a { display: flex; align-items: center; height: 64px; }
.side a i { flex: none; margin-left: 19px; }
.side a svg { margin-left: auto; margin-right: 38px; width: 28px; height: 28px; fill: #6e6e6e; }
.side .on { border-radius: 0 32px 32px 0; background: #e4e8eb; }
.side .on i { margin-left: 15px; border-top-color: #333; border-left-width: 7px; border-right-width: 7px; }
.side .on svg { fill: #3c4043; }
.grow { flex: 1; }
.foot { border-top: 2px solid #e0e0e0; padding-left: 18px; background: radial-gradient(circle at 20px 0, transparent 19px, #1c1238 20px) 0 100% / 20px 20px no-repeat; }
.foot button { display: grid; place-items: center; width: 64px; height: 64px; border-radius: 50%; background: #d9dde0; }

/* report card */
.card { flex: 1; min-width: 0; margin-right: 24px; background: #fff; }
.map { width: 100%; height: auto; }
.map path { vector-effect: non-scaling-stroke; stroke-linejoin: round; }
.coast { fill: #a5dff1; stroke: #8fc0ce; stroke-width: 3px; }
.fill { fill: #a5dff1; }
.map .line { fill: none; stroke: #8ac6da; stroke-width: 1px; }
.map .isle { fill: none; stroke: #8db9c4; stroke-width: 2px; }
.map .sea { fill: #fff; stroke: #9cc9d6; stroke-width: 1px; }
.map .none { fill: #f3f3f3; stroke: #ddd; stroke-width: 1px; }
.map .us { fill: #7fcae6; stroke: #6db0ca; stroke-width: 1px; }
.map .mx { fill: #88cfe9; stroke: #74b5cc; stroke-width: 1px; }
.map .br, .map .eu { fill: #8fd3ea; stroke: #80bfd3; stroke-width: 1px; }
.map .id { fill: #6fc3e1; stroke: #62a9c2; stroke-width: 1px; }
.map .cn { fill: #058dc7; stroke: #0a7fb2; stroke-width: 1px; }
.lg { font: 22px "Liberation Sans", Arial, sans-serif; fill: #222; paint-order: stroke; stroke: #fff; stroke-width: 3px; }

.dims { display: flex; align-items: center; gap: 24px; height: 53px; padding-left: 15px; border-top: 2px solid #e5e5e5; }
.dims span { margin-right: -13px; }
.dims b { position: relative; font-weight: 700; }
.dims b::after { content: ""; position: absolute; left: 22px; bottom: -13px; border: 10px solid transparent; border-top: 0; border-bottom-color: #e6e6e6; }
.bar { display: flex; align-items: center; height: 59px; padding: 0 41px 2px 32px; background: #f5f5f5; border-top: 2px solid #e2e2e2; }
.pick { position: relative; display: inline-block; font-weight: 400; }
.pick::after { content: ""; position: absolute; right: 11px; top: 18px; border: 6px solid transparent; border-top: 10px solid #555; border-bottom: 0; pointer-events: none; }
.pick select { appearance: none; display: block; height: 46px; padding: 0 34px 0 10px; border: 2px solid #c6c6c6; border-radius: 4px; background: linear-gradient(#fff, #f7f7f7); color: #444; }
.find { display: flex; margin-left: auto; height: 37px; width: 265px; border: 2px solid #999; background: #f8f8f8; }
.find input { flex: 1; min-width: 0; border: 0; border-right: 2px solid #bbb; background: #fff; }
.find button { display: grid; place-items: center; width: 44px; }
.adv { margin: 0 24px 0 13px; font-size: 19px; color: #15578c; }
.views { display: flex; height: 42px; border: 2px solid #b5b5b5; border-radius: 4px; background: #f8f8f8; }
.views button { display: grid; place-items: center; width: 44px; }
.views button + button { width: 45px; border-left: 2px solid #b5b5b5; }
.views svg { width: 24px; height: 24px; }
.views .sel { background: #eee; box-shadow: inset 2px 2px 4px #0003; }

/* data table */
table { width: 100%; table-layout: fixed; border-collapse: separate; border-spacing: 0; border-top: 2px solid #c8c8c8; }
.c0 { width: 418px; } .c1 { width: 228px; } .c2 { width: 220px; } .c3 { width: 226px; } .c4 { width: 220px; }
.c5 { width: 190px; } .c6 { width: 234px; } .c7 { width: 342px; } .c8 { width: 328px; } .c9 { width: 294px; }
th, td { border-right: 2px solid #c8c8c8; padding: 0; }
thead th { background: #e9e9e9; font-weight: 700; font-size: 18px; }
.groups { height: 78px; }
.groups th { text-align: left; padding-left: 10px; border-bottom: 2px solid #c8c8c8; }
.groups .country { padding-left: 41px; border-left: 2px solid #c8c8c8; border-bottom-color: #dedede; }
.conv { display: flex; align-items: center; gap: 8px; }
.metrics { height: 76px; }
.metrics th { padding-right: 10px; border-bottom: 2px solid #dedede; }
.sorted { position: relative; }
.arrow { position: absolute; right: 3px; top: 26px; }
.help { width: 20px; height: 20px; margin: 0 6px; border-radius: 50%; background: #fff; color: #bbb; font-size: 15px; line-height: 20px; font-weight: 700; vertical-align: middle; }
.solo { margin: 0; }
.totals td { height: 111px; padding: 17px 16px 0 0; vertical-align: top; text-align: right; font-size: 18px; line-height: 20px; color: #888; background: #fafafa; border-bottom: 2px solid #e0e0e0; }
.totals .s { background: #fff; }
.totals strong { display: block; font-weight: 400; font-size: 32px; line-height: 34px; color: #222; }
.rows tr { height: 56px; }
.rows tr:nth-child(3n+1) { height: 57px; }
.rows th, .rows td { padding-bottom: 2px; border-bottom: 2px solid #e4e4e4; font-size: 21px; font-weight: 400; text-align: right; }
.rows td { padding-right: 12px; }
.rows .s { background: #fafafa; font-weight: 700; }
.rows i { display: inline-block; width: 81px; font-style: normal; font-size: 17px; color: #999; }
.rows th div { display: flex; align-items: center; }
.rows th span { width: 44px; }
.rows th svg { width: 26px; height: 18px; margin: 0 14px 0 24px; }
.rows a { color: #1b6194; }
```
